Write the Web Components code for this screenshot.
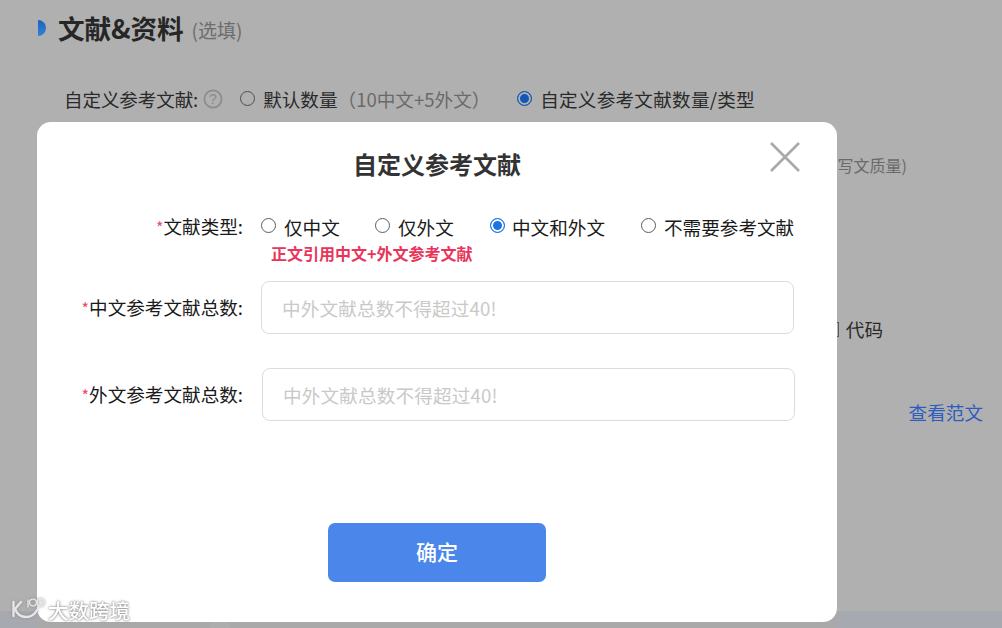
<!DOCTYPE html>
<html lang="zh-CN">
<head>
<meta charset="utf-8">
<title>自定义参考文献</title>
<style>
  html, body { margin: 0; height: 628px; overflow: hidden; background: #b0b0b0; }
  body { font-family: "Liberation Sans", "Noto Sans CJK SC", sans-serif; }
</style>
</head>
<body>
<back-page>
  <section-title slot="title" note="(选填)">文献&amp;资料</section-title>
</back-page>
<ref-dialog heading="自定义参考文献">
  <form-row label="文献类型:" slot="type">
    <radio-item>仅中文</radio-item>
    <radio-item>仅外文</radio-item>
    <radio-item checked>中文和外文</radio-item>
    <radio-item>不需要参考文献</radio-item>
  </form-row>
  <form-row label="中文参考文献总数:" slot="cn">
    <text-box placeholder="中外文献总数不得超过40!"></text-box>
  </form-row>
  <form-row label="外文参考文献总数:" slot="en" shift>
    <text-box placeholder="中外文献总数不得超过40!"></text-box>
  </form-row>
</ref-dialog>
<water-mark></water-mark>

<script>
const CJK = `"Noto Sans CJK SC", sans-serif`;

class RadioItem extends HTMLElement {
  connectedCallback() {
    this.attachShadow({ mode: 'open' });
    this.shadowRoot.innerHTML = `
      <style>
        :host { display: inline-flex; align-items: center; gap: 8px; font: 18.6px/28px ${CJK}; color: var(--radio-text, #1a1a1a); }
        i { width: 13px; height: 13px; border: 1px solid var(--radio-line, #5c5c5c); border-radius: 50%; box-sizing: content-box; position: relative; top: -1px; background: var(--radio-fill, #fff); }
        :host([checked]) i { border-color: var(--radio-on, #1a73e8); background: var(--radio-on, #1a73e8); box-shadow: inset 0 0 0 2px var(--radio-fill, #fff); }
      </style>
      <i></i><span><slot></slot></span>`;
  }
}
customElements.define('radio-item', RadioItem);

class TextBox extends HTMLElement {
  connectedCallback() {
    this.attachShadow({ mode: 'open' });
    this.shadowRoot.innerHTML = `
      <style>
        :host { display: flex; align-items: center; box-sizing: border-box; width: 533px; height: 53px; padding: 0 20px; border: 1px solid #dcdcdc; border-radius: 8px; background: #fff; }
        span { font: 18.6px/28px ${CJK}; letter-spacing: .15px; color: #c9c9c9; }
      </style>
      <span>${this.getAttribute('placeholder')}</span>`;
  }
}
customElements.define('text-box', TextBox);

class FormRow extends HTMLElement {
  connectedCallback() {
    this.attachShadow({ mode: 'open' });
    this.shadowRoot.innerHTML = `
      <style>
        :host { display: flex; align-items: center; gap: 18px; }
        :host([shift]) { gap: 19px; }
        label { width: 206px; text-align: right; white-space: nowrap; font: 18.6px/28px ${CJK}; color: #1a1a1a; }
        b { color: #e8486c; font-weight: 400; font-size: 16px; }
        .body { display: flex; align-items: center; }
        ::slotted(radio-item:nth-child(1)) { width: 114px; }
        ::slotted(radio-item:nth-child(2)) { width: 115px; }
        ::slotted(radio-item:nth-child(3)) { width: 151px; gap: 7px; }
      </style>
      <label><b>*</b>${this.getAttribute('label')}</label>
      <div class="body"><slot></slot></div>`;
  }
}
customElements.define('form-row', FormRow);

class RefDialog extends HTMLElement {
  connectedCallback() {
    this.attachShadow({ mode: 'open' });
    this.shadowRoot.innerHTML = `
      <style>
        :host { position: absolute; left: 37px; top: 122px; width: 800px; height: 500px; box-sizing: border-box; padding: 25px 0 40px; display: flex; flex-direction: column; background: #fff; border-radius: 14px; }
        h2 { margin: 0; text-align: center; font: 700 24px/34px ${CJK}; color: #333; }
        .close { position: absolute; left: 732px; top: 19px; width: 32px; height: 32px; }
        .type { margin-top: 31px; }
        .hint { margin: -1px 0 0 234px; font: 700 16px/26px ${CJK}; color: #e8355c; }
        .cn { margin-top: 15px; }
        .en { margin-top: 34px; }
        button { margin: auto auto 0; width: 218px; height: 59px; padding: 0 0 3px; border: 0; border-radius: 7px; background: #4b87ea; color: #fff; font: 500 21px/30px ${CJK}; }
      </style>
      <h2>${this.getAttribute('heading')}</h2>
      <svg class="close" viewBox="0 0 32 32" fill="none" stroke="#a9a9a9" stroke-width="2.6"><path d="M2 2 30 30M30 2 2 30"/></svg>
      <div class="type"><slot name="type"></slot></div>
      <div class="hint">正文引用中文+外文参考文献</div>
      <div class="cn"><slot name="cn"></slot></div>
      <div class="en"><slot name="en"></slot></div>
      <button>确定</button>`;
  }
}
customElements.define('ref-dialog', RefDialog);

class SectionTitle extends HTMLElement {
  connectedCallback() {
    this.attachShadow({ mode: 'open' });
    this.shadowRoot.innerHTML = `
      <style>
        :host { display: flex; align-items: center; font-family: ${CJK}; }
        i { width: 8px; height: 16px; margin: 0 12px 0 38px; border-radius: 0 8px 8px 0; background: linear-gradient(#1b62c2, #2f83d0); }
        strong { font-size: 26.6px; line-height: 36px; color: #262626; letter-spacing: -.1px; }
        span { margin-left: 8px; font-size: 19px; color: #6c6c6c; position: relative; top: 2px; }
      </style>
      <i></i><strong><slot></slot></strong><span>${this.getAttribute('note')}</span>`;
  }
}
customElements.define('section-title', SectionTitle);

class BackPage extends HTMLElement {
  connectedCallback() {
    this.attachShadow({ mode: 'open' });
    this.shadowRoot.innerHTML = `
      <style>
        :host { display: block; height: 628px; box-sizing: border-box; padding-top: 10px; position: relative; font: 18.6px/28px ${CJK}; color: #2a2a2a;
          --radio-fill: #b0b0b0; --radio-line: #4e4e4e; --radio-on: #1257b5; --radio-text: #2a2a2a; }
        .ref { display: flex; align-items: center; margin: 39px 0 0 64px; }
        .ref > span { letter-spacing: -.15px; }
        .ask { width: 20px; height: 20px; margin: 0 17px 0 5px; }
        .ref radio-item:nth-of-type(1) { width: 277px; }
        .ref radio-item:nth-of-type(2) { letter-spacing: .25px; }
        .gray { color: #6a6a6a; }
        .line { display: flex; justify-content: flex-end; }
        .quality { margin-top: 38px; padding-right: 95px; font-size: 16px; color: #6a6a6a; }
        .code { margin-top: 136px; padding-right: 119px; align-items: center; gap: 7px; }
        .code i { width: 7px; height: 15px; box-sizing: border-box; border: 1px solid #5a5a5a; border-left: 0; }
        .view { margin-top: 55px; padding-right: 19px; color: #2c5cc0; }
        .strip { position: absolute; left: 0; right: 0; bottom: 0; height: 17px;
          background: linear-gradient(90deg, #a7a9b1 0 37px, #a9a9a9 37px 210px, #adadad 210px 230px, #a9a9a9 230px 837px, #a7a9b1 837px); }
      </style>
      <slot name="title"></slot>
      <div class="ref">
        <span>自定义参考文献:</span>
        <svg class="ask" viewBox="0 0 20 20"><circle cx="10" cy="10" r="8.6" fill="none" stroke="#8b8b8b" stroke-width="1.7"/><text x="10" y="15" text-anchor="middle" font-size="14" fill="#8b8b8b" font-family="Liberation Sans">?</text></svg>
        <radio-item>默认数量<span class="gray">（10中文+5外文）</span></radio-item>
        <radio-item checked>自定义参考文献数量/类型</radio-item>
      </div>
      <div class="line quality">写文质量)</div>
      <div class="line code"><i></i>代码</div>
      <div class="line view">查看范文</div>
      <div class="strip"></div>`;
  }
}
customElements.define('back-page', BackPage);

class WaterMark extends HTMLElement {
  connectedCallback() {
    this.attachShadow({ mode: 'open' });
    this.shadowRoot.innerHTML = `
      <style>
        :host { position: absolute; left: 8px; top: 592px; display: flex; align-items: center; gap: 2px; }
        svg { width: 38px; height: 30px; filter: drop-shadow(0 0 1.5px #8a8a8a); }
        span { font: 500 20.5px/30px ${CJK}; color: #fff; opacity: .9; text-shadow: 0 0 2px #777, 0 0 3px #999; position: relative; top: 3px; }
      </style>
      <svg viewBox="0 0 38 30" fill="none" stroke="#e6e6e6" stroke-width="2.4" stroke-linecap="round">
        <path d="M5.5 10v14"/>
        <path d="M13 10 7 17c2 5 6 8 11 8s9-3 11-7"/>
        <path d="M20 8v7" stroke-width="1.4"/>
        <circle cx="25" cy="10.5" r="3.4" stroke-width="1.4"/><circle cx="32.5" cy="10.5" r="3.4" stroke-width="1.4"/>
      </svg>
      <span>大数跨境</span>`;
  }
}
customElements.define('water-mark', WaterMark);
</script>
</body>
</html>
